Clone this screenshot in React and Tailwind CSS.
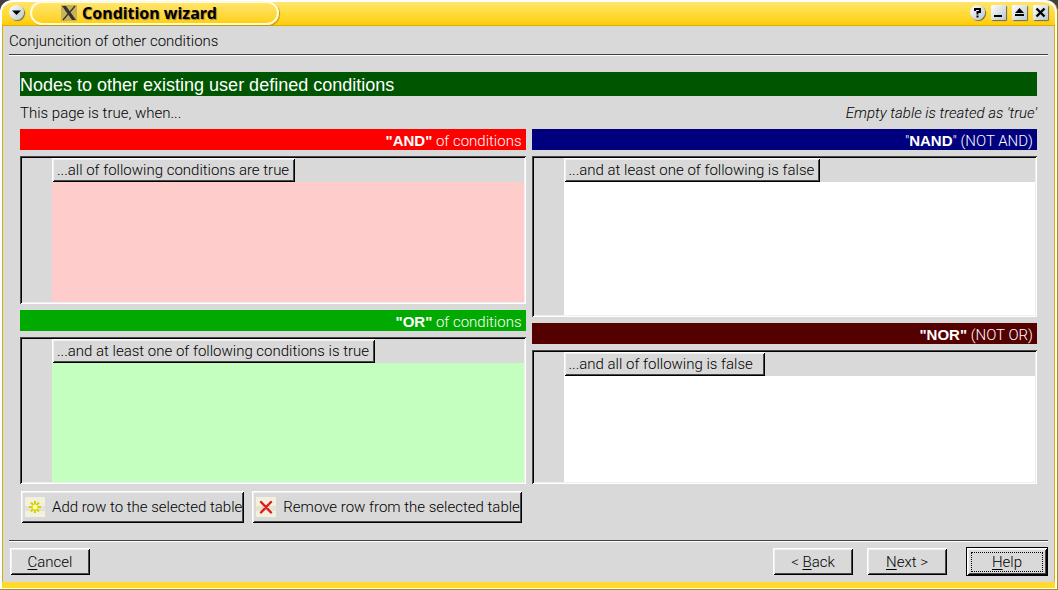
import React from "react";

const raised =
  "bg-[#d9d9d9] shadow-[inset_1px_1px_0_#fff,inset_-1px_-1px_0_#000,inset_2px_2px_0_#efefef,inset_-2px_-2px_0_#484848]";

const leftTables = [
  {
    bold: '"AND"',
    rest: " of conditions",
    header: "...all of following conditions are true",
    pad: "pr-1.5",
    bar: "bg-[#ff0000]",
    body: "bg-[#ffcccc]",
    grow: "flex-1",
  },
  {
    bold: '"OR"',
    rest: " of conditions",
    header: "...and at least one of following conditions is true",
    pad: "pr-1.5",
    bar: "bg-[#00aa00]",
    body: "bg-[#c4ffbf]",
    grow: "flex-1",
  },
];

const rightTables = [
  {
    quote: '"',
    bold: "NAND",
    rest: '" (NOT AND)',
    header: "...and at least one of following is false",
    pad: "pr-1.5",
    bar: "bg-[#00007f]",
    body: "bg-white",
    grow: "flex-[7]",
  },
  {
    bold: '"NOR"',
    rest: " (NOT OR)",
    header: "...and all of following is false",
    pad: "pr-3",
    bar: "bg-[#550000]",
    body: "bg-white",
    grow: "flex-[6]",
  },
];

const ConditionTable = ({ item }) => {
  return (
    <section className={`flex min-h-32 flex-col gap-1.5 ${item.grow}`}>
      <h2
        className={`h-[21px] shrink-0 pr-1 text-right text-[15px] leading-6 text-white ${item.bar}`}
      >
        {item.quote}
        <b className="font-['Liberation_Sans',Arial,sans-serif] font-bold">
          {item.bold}
        </b>
        {item.rest}
      </h2>
      <div className="flex flex-1 p-0.5 shadow-[inset_1px_1px_0_#484848,inset_-1px_-1px_0_#fff,inset_2px_2px_0_#000,inset_-2px_-2px_0_#efefef]">
        <table className="w-full table-fixed border-collapse">
          <colgroup>
            <col className="w-[30px]" />
            <col />
          </colgroup>
          <thead>
            <tr className="h-6">
              <td className="p-0" />
              <th className="p-0 text-left font-light">
                <div
                  className={`h-6 w-fit pl-[5px] text-[15px] leading-6 whitespace-nowrap ${item.pad} ${raised}`}
                >
                  {item.header}
                </div>
              </th>
            </tr>
          </thead>
          <tbody>
            <tr>
              <td className="p-0" />
              <td className={`p-0 ${item.body}`} />
            </tr>
          </tbody>
        </table>
      </div>
    </section>
  );
};

const TitleButton = ({ label, round, children }) => (
  <button
    aria-label={label}
    className={`flex size-[15px] items-center justify-center bg-linear-to-br from-white to-[#b9c6d0] shadow-[1px_1px_1px_#6b6b50] ${
      round ? "rounded-full" : "rounded-[1px]"
    }`}
  >
    <svg viewBox="0 0 15 15" className="size-[15px]" fill="none" stroke="#000">
      {children}
    </svg>
  </button>
);

const TitleBar = () => (
  <header className="flex h-[26px] items-center justify-between rounded-t-xl border-t-2 border-b border-t-white border-b-[#d8b000] bg-linear-to-b from-[#ffe56a] via-[#ffdc38] to-[#ffcc00] pr-1.5 pb-0.5 pl-[7px]">
    <div className="flex items-center gap-1.5">
      <TitleButton label="Window menu" round>
        <path d="M3 5.5h9L7.5 10z" fill="#000" stroke="none" />
      </TitleButton>
      <div className="flex h-6 w-[249px] items-center gap-[5px] rounded-full border-2 border-[#fffbe0] bg-linear-to-b from-[#ffe56a] to-[#ffd000] pl-[29px] shadow-[1px_1px_1px_#c09800]">
        <svg viewBox="0 0 16 16" className="size-4 shrink-0">
          <rect width="16" height="16" fill="#c9b25a" />
          <path d="M1 1h4l10 14h-4z" fill="#333" />
          <path d="M14 1L9 7M7 9l-5 6" stroke="#333" strokeWidth="1.2" />
        </svg>
        <h1 className="font-['Noto_Sans',sans-serif] text-base leading-5 font-bold whitespace-nowrap [text-shadow:1px_1px_1px_#a08a30]">
          Condition wizard
        </h1>
      </div>
    </div>
    <div className="flex gap-1.5 pr-px">
      <TitleButton label="What's this?" round>
        <path d="M5 6V4h5v3H7.500V9.500" strokeWidth="2" />
        <path d="M6.500 11.500h2" strokeWidth="2" />
      </TitleButton>
      <TitleButton label="Minimize">
        <path d="M3 11h8" strokeWidth="2" />
      </TitleButton>
      <TitleButton label="Maximize">
        <path d="M3 8h9L7.5 3z" fill="#000" stroke="none" />
        <path d="M3 10h9" strokeWidth="2" />
      </TitleButton>
      <TitleButton label="Close">
        <path d="M3.500 3.500l8 8M11.500 3.500l-8 8" strokeWidth="2.4" />
      </TitleButton>
    </div>
  </header>
);

const Rule = () => (
  <hr className="mx-1.5 h-0.5 shrink-0 border-t border-b border-t-[#404040] border-b-white" />
);

const NavButton = ({ before, letter, after }) => (
  <button className={`h-[27px] w-20 text-[15px] leading-7 ${raised}`}>
    {before}
    <u className="underline-offset-2">{letter}</u>
    {after}
  </button>
);

const RowButton = ({ icon, children }) => (
  <button
    className={`flex h-8 items-center gap-[7px] pr-0.5 pl-1 text-[15px] ${raised}`}
  >
    <svg viewBox="0 0 20 20" className="size-5">
      <rect width="20" height="20" fill="#f4f0e0" />
      <rect y="9" width="20" height="5" fill="#e6e2d2" />
      {icon}
    </svg>
    {children}
  </button>
);

const App = () => {
  return (
    <div className="flex min-h-screen flex-col bg-[#404040] font-[Roboto,'Liberation_Sans',sans-serif] font-light text-black">
      <div className="flex flex-1 flex-col rounded-t-xl border-r border-b border-[#ab8c18] bg-white pr-0.5 pb-px pl-0.5">
        <TitleBar />
        <div className="flex flex-1 flex-col border-r border-l border-[#d8b000] bg-[#d9d9d9]">
          <p className="h-7 pl-1.5 text-[15px] leading-[30px]">
            Conjuncition of other conditions
          </p>
          <Rule />

          <main className="flex flex-1 flex-col px-[17px] pt-4 pb-[17px]">
            <h2 className="h-6 bg-[#005500] font-['Liberation_Sans',Arial,sans-serif] text-lg leading-[26px] font-normal text-white">
              Nodes to other existing user defined conditions
            </h2>
            <div className="flex h-[33px] justify-between text-[15px] leading-[34px]">
              <p>This page is true, when...</p>
              <p className="italic">Empty table is treated as 'true'</p>
            </div>
            <div className="grid flex-1 grid-cols-2 gap-1.5">
              <div className="flex flex-col gap-1.5">
                {leftTables.map((item) => (
                  <ConditionTable key={item.header} item={item} />
                ))}
              </div>
              <div className="flex flex-col gap-1.5">
                {rightTables.map((item) => (
                  <ConditionTable key={item.header} item={item} />
                ))}
              </div>
            </div>
            <div className="mt-[7px] flex gap-2 pl-px">
              <RowButton
                icon={
                  <>
                    <path
                      d="M10 4v12M4 10h12M6 5.500l8 9M14 5.500l-8 9"
                      stroke="#d2d200"
                      strokeWidth="2"
                    />
                    <circle cx="10" cy="10" r="2.500" fill="#ffffa0" />
                  </>
                }
              >
                Add row to the selected table
              </RowButton>
              <RowButton
                icon={
                  <path
                    d="M5 5l10 10.500M15 5L5 15.500"
                    stroke="#dd1c1c"
                    strokeWidth="2.400"
                    strokeLinecap="round"
                  />
                }
              >
                Remove row from the selected table
              </RowButton>
            </div>
          </main>

          <Rule />
          <footer className="flex h-10 items-center justify-between pr-1.5 pb-0.5 pl-[7px]">
            <NavButton letter="C" after="ancel" />
            <div className="flex items-center">
              <NavButton before="< " letter="B" after="ack" />
              <div className="ml-3.5">
                <NavButton letter="N" after="ext >" />
              </div>
              <div className="ml-[19px] border border-black">
                <button className={`h-[27px] w-20 p-1 ${raised}`}>
                  <span className="block border border-dotted border-black text-[15px] leading-[18px]">
                    <u className="underline-offset-2">H</u>elp
                  </span>
                </button>
              </div>
            </div>
          </footer>
        </div>
        <div className="h-1.5 bg-[#ffd92e]" />
      </div>
    </div>
  );
};

export default App;
